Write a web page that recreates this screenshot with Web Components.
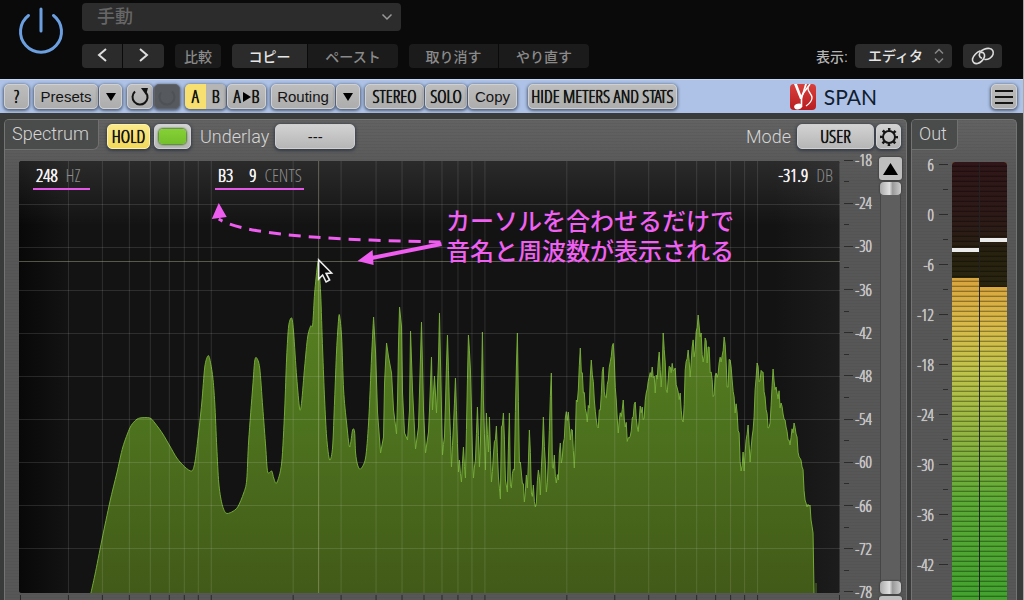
<!DOCTYPE html>
<html lang="ja">
<head>
<meta charset="utf-8">
<title>SPAN</title>
<style>
html,body{margin:0;height:100%;background:#0a0a0a}
body{font-family:"Liberation Sans","Noto Sans CJK JP",sans-serif;overflow:hidden;
--narrow:"Open Sans Condensed Light","Roboto Condensed",sans-serif;
--ink:0 0 0 currentColor,0 0 0 currentColor,0 0 1px currentColor}
</style>
</head>
<body>
<span-app></span-app>
<script>
function define(name, html, setup) {
  const tpl = document.createElement('template');
  tpl.innerHTML = html;
  customElements.define(name, class extends HTMLElement {
    constructor() {
      super();
      this.attachShadow({mode: 'open'}).append(tpl.content.cloneNode(true));
    }
    connectedCallback() { if (setup) setup(this, this.shadowRoot); }
  });
}

/* Plug-in button: kind = narrow | on | off | light ; w = width in px */
define('plug-button', `<style>
:host{display:block;width:var(--w,auto);height:25px;flex:none}
button{box-sizing:border-box;width:100%;height:100%;padding:0;border:1px solid #d0d0d0;border-radius:5px;background:linear-gradient(#bdbdbd,#adadad);
box-shadow:0 1px 3px 1px rgba(30,40,60,.6);color:#141414;font:15px/23px "Liberation Sans",sans-serif;white-space:nowrap;display:flex;align-items:center;justify-content:center}
:host([kind~=narrow]) button{font-family:var(--narrow);font-size:18px;font-weight:300;text-shadow:var(--ink)}
:host([kind~=on]) button{background:linear-gradient(#fbe98a,#f2d95c);border-color:#fdf0a8}
:host([kind~=off]) button{background:#56595d;border-color:#606468;color:#4a4c50}
:host([kind~=light]) button{background:linear-gradient(#d2d2d2,#b6b6b6)}
</style><button type="button"><slot></slot></button>`, (h, r) => {
  if (h.getAttribute('w')) h.style.setProperty('--w', h.getAttribute('w') + 'px');
  if (h.getAttribute('label')) r.querySelector('button').setAttribute('aria-label', h.getAttribute('label'));
});

define('host-header', `<style>
:host{display:flex;box-sizing:border-box;height:79px;flex:none;background:#0a0a0a;padding-left:17px;color:#b4b4b4;font:500 14px "Liberation Sans","Noto Sans CJK JP",sans-serif}
.power{width:48px;height:48px;margin-top:6px;padding:0;border:0;background:none;flex:none}
.col{flex:1;margin:3px 21px 0 17px;display:flex;flex-direction:column;gap:13px}
button,select{font:500 14px "Liberation Sans","Noto Sans CJK JP",sans-serif;color:inherit}
.wrap{position:relative;display:block}
.wrap svg{position:absolute;right:8px;top:50%;transform:translateY(-50%);pointer-events:none}
select{appearance:none;border:0;background:#2c2c2c;border-radius:4px;width:100%;margin:0;height:24px;padding:0 0 0 13px}
.preset{width:319px}
.preset select{height:28px;color:#666;font-size:18px;padding-left:15px}
.row{display:flex;align-items:center}
.grp{display:flex;gap:1px;margin-right:11px;border-radius:4px;overflow:hidden}
.grp button{height:24px;border:0;padding:0;background:#1b1b1b;color:#8a8a8a}
.grp .a{background:#2b2b2b;color:#e6e6e6}
label{margin:0 7px 0 auto}
.view{width:97px;color:#e6e6e6;margin-right:11px}
.link{width:39px;height:24px;border:0;padding:0;border-radius:4px;background:#2c2c2c;color:#ddd;display:grid;place-items:center}
</style>
<button class="power" type="button" aria-label="Power"><svg width="48" height="48" fill="none" stroke="#6b9fe0" stroke-width="3" stroke-linecap="round"><path d="M24 3v22M11.5 9.5a20.500 20.500 0 1 0 25 0"/></svg></button>
<div class="col">
<div class="wrap preset"><select aria-label="プリセット"><option>手動</option></select><svg width="12" height="8" fill="none" stroke="#999" stroke-width="1.500"><path d="M1.500 1.500L6 6l4.500-4.500"/></svg></div>
<div class="row">
<div class="grp"><button class="a" type="button" aria-label="前へ" style="width:40px"><svg width="12" height="16" fill="none" stroke="#ddd" stroke-width="2"><path d="M10 2L3 8l7 6"/></svg></button><button class="a" type="button" aria-label="次へ" style="width:41px"><svg width="12" height="16" fill="none" stroke="#ddd" stroke-width="2"><path d="M2 2l7 6-7 6"/></svg></button></div>
<div class="grp"><button type="button" style="width:46px">比較</button></div>
<div class="grp"><button class="a" type="button" style="width:75px">コピー</button><button type="button" style="width:90px">ペースト</button></div>
<div class="grp"><button type="button" style="width:89px">取り消す</button><button type="button" style="width:90px">やり直す</button></div>
<label for="view">表示:</label>
<div class="wrap view"><select id="view"><option>エディタ</option></select><svg width="10" height="16" fill="none" stroke="#888" stroke-width="1.500"><path d="M1 5.500L5 1.500l4 4M1 10.500l4 4 4-4"/></svg></div>
<button class="link" type="button" aria-label="リンク"><svg width="24" height="18" fill="none" stroke="#ddd" stroke-width="1.600" stroke-linecap="round"><path d="M9 4C6 5 2 9 1.500 12s2 5 5 4.500 6.500-4 7-7-1.500-4.500-3-4"/><path d="M14 12.500c3 .5 7-2 8-5s-.5-5.500-3.500-6-8 1-9.500 4 0 5 1.500 5.500"/></svg></button>
</div></div>`);

define('tool-bar', `<style>
:host{display:flex;box-sizing:border-box;height:34px;flex:none;align-items:flex-start;gap:1px;padding:4px 6px 0 4px;background:#adc2e6;border-top:1px solid #c6d6f0}
.g{margin-left:4px}.w{margin-left:10px}
.seg{display:flex;width:41px;height:25px;border-radius:5px;overflow:hidden;box-shadow:0 1px 3px 1px rgba(30,40,60,.6);margin-left:4px}
.seg button{flex:1;padding:0;border:0;background:#b5b5b5;color:#141414;font:300 18px/23px var(--narrow);text-shadow:var(--ink)}.seg .on{background:#f7e070}
.brand{display:flex;gap:8px;margin:0 113px 0 auto;align-items:center;height:25px;font:21px Lato,sans-serif;color:#111d30}
</style>
<plug-button w="25" kind="narrow">?</plug-button>
<plug-button w="64" class="g">Presets</plug-button>
<plug-button w="23" label="Preset list"><svg width="10" height="8"><path d="M0 0h10L5 8z"/></svg></plug-button>
<plug-button w="26" class="g" label="Undo"><svg width="20" height="20" fill="none" stroke="#141414" stroke-width="2"><path d="M5 4.500a7.500 7.500 0 1 0 11 1"/><path d="M11 1h7l-2 7z" fill="#141414" stroke="none"/></svg></plug-button>
<plug-button w="26" kind="off" label="Redo"><svg width="20" height="20" fill="none" stroke="#4e5155" stroke-width="2"><path d="M15 4.500a7.500 7.500 0 1 1-11 1"/></svg></plug-button>
<div class="seg"><button class="on" type="button">A</button><button type="button">B</button></div>
<plug-button w="39" kind="narrow">A<svg width="11" height="10"><path d="M2 0l8 5-8 5z"/></svg>B</plug-button>
<plug-button w="64" class="g">Routing</plug-button>
<plug-button w="24" label="Routing list"><svg width="10" height="8"><path d="M0 0h10L5 8z"/></svg></plug-button>
<plug-button w="59" class="g" kind="narrow">STEREO</plug-button>
<plug-button w="42" kind="narrow">SOLO</plug-button>
<plug-button w="49">Copy</plug-button>
<plug-button w="149" class="w" kind="narrow">HIDE METERS AND STATS</plug-button>
<div class="brand"><svg width="26" height="26"><defs><linearGradient id="r" x2="0" y2="1"><stop stop-color="#d8403c"/><stop offset="1" stop-color="#b81c20"/></linearGradient></defs><rect width="26" height="26" rx="4" fill="url(#r)"/><path d="M4 0h3l4.500 12L15 0h2l-5 15h-2z" fill="#fff"/><path d="M20 0c-3 5-8 9-8.500 13v10" fill="none" stroke="#fff" stroke-width="1.600"/><path d="M18 3c-1 5 4.500 7 4 11-.3 4-3 6-6 8" fill="none" stroke="#fff" stroke-width="1.300"/><ellipse cx="8" cy="22.500" rx="4" ry="2.800" fill="#fff" transform="rotate(-14 8 22)"/></svg><span>SPAN</span></div>
<plug-button w="26" label="Menu"><svg width="18" height="16" stroke="#141414" stroke-width="2"><path d="M0 2h18M0 8h18M0 14h18"/></svg></plug-button>`);

define('plug-panel', `<style>
:host{display:flex;flex-direction:column;min-height:0;min-width:0;overflow:hidden;box-sizing:border-box;border:1px solid #747474;border-bottom:0;border-radius:5px 5px 0 0;background:repeating-linear-gradient(rgba(0,0,0,.04) 0 1px,transparent 1px 3px),linear-gradient(#626262,#575757 60px)}
header{display:flex;height:37px;flex:none}
h2{margin:-1px 0 0 -1px;box-sizing:border-box;width:var(--tab);height:31px;flex:none;padding-left:7px;font:300 18px/28px Roboto,"Liberation Sans",sans-serif;color:#d6d6d6;background:#4a4b4b;border:1px solid #707070;border-top-color:#333;border-left-color:#333;border-radius:4px 0 6px 0}
.c{flex:1;display:flex;gap:4px;padding:4px 5px 0 8px}
.b{flex:1;display:flex;min-height:0}
</style><header><h2><slot name="title"></slot></h2><div class="c"><slot name="controls"></slot></div></header><div class="b"><slot></slot></div>`);

/* Vertical dB scale: first value, number of labels, and a fixed pitch or an even spread over the height */
define('db-scale', `<style>
:host{display:flex;flex-direction:column;justify-content:space-between;flex:none;color:#c4c4c4;font:300 16px var(--narrow)}
div{display:flex;align-items:center;height:0;flex:none;overflow:visible}
i{height:1px;width:9px;background:#2c2c2c}
.m i{width:5px}
span{flex:1;text-align:right;line-height:16px;text-shadow:var(--ink)}
:host([side=right]) div{flex-direction:row-reverse;gap:5px}
:host([pitch]){justify-content:flex-start}
:host([pitch]) div{height:25px}
</style>`, (h, r) => {
  const from = +h.getAttribute('from'), n = +h.getAttribute('count');
  for (let i = 0; i < n * 2 - 1; i++) {
    const d = document.createElement('div');
    d.innerHTML = '<i></i>';
    if (i % 2) d.className = 'm';
    else { const s = document.createElement('span'); s.textContent = from - i * 3; d.append(s); }
    r.append(d);
  }
});

define('zoom-slider', `<style>
:host{display:flex;flex-direction:column;align-items:center;gap:2px;width:23px;margin-bottom:-19px}
.s{width:23px;height:23px;flex:none;padding:0;border:0;border-radius:3px;background:#bebebe;box-shadow:0 0 2px #222}
.t{width:21px;height:13px;flex:none;padding:0;border:0;border-radius:4px;background:linear-gradient(90deg,#aaa,#e0e0e0 45%,#999 60%,#ccc);box-shadow:0 0 2px #222}
.k{flex:1;width:19px;background:#5e5e5e;border:solid #454545;border-width:0 1px;margin:-2px 0}
</style><button class="s" type="button" aria-label="Up"><svg width="15" height="12" style="display:block;margin:auto"><path d="M7.500 0L15 12H0z"/></svg></button><button class="t" type="button" aria-label="Upper limit"></button><div class="k"></div><button class="t" type="button" aria-label="Lower limit"></button><button class="s" type="button" aria-label="Down"></button>`);

/* Measured spectrum: x (log frequency), y (level) pairs in plot units */
const SMOOTH = [91,593,95,575,102,540,110,502,117,473,123,447,130,428,135,421,140,418,150,418,155,423,163,434,170,446,177,458,185,467,192,471,195,463,198,440,202,403,205,367,208,356,210,359,213,377,215,403,217,447,219,483,222,503,226,513,232,512,238,507,244,493,247,480,249,440,253,387,255,361,257,358,260,368,263,407,266,447,268,472,272,471,274,478,277,483,282,463,285,410,287,357,289,326,292,318,294,333,297,377,300,409,302,402,305,367,308,337,311,326,313,325,315,293,318,264,319,264,321,293,323,350,325,400,327,437,330,460,333,447,335,400,337,350,339,319,340,316,342,337,344,390,347,423,350,447,353,430,355,432,356,453,358,465,361,469,366,458,369,423,372,357,374,317];
const ROUGH = [376,353,378,413,381,453,384,437,385,383,387,343,389,357,392,373,394,410,397,434,398,400,399,343,400,307,402,327,403,393,405,433,408,440,410,410,411,331,413,390,416,449,419,427,422,322,424,410,426,453,429,432,430,410,432,357,433,410,435,376,437,413,439,360,440,313,442,410,443,455,445,437,448,335,450,410,452,467,456,378,459,472,460,460,462,482,464,447,466,478,469,335,471,370,473,453,474,478,476,460,478,407,480,467,481,443,483,332,484,400,486,470,487,413,489,452,490,417,492,482,494,455,497,426,499,477,501,499,502,427,504,413,506,480,508,492,510,413,511,485,515,470,517,367,518,333,520,463,522,473,525,502,527,475,528,488,530,430,532,493,534,485,536,507,539,470,541,495,544,417,547,492,549,460,552,373,553,467,555,455,557,483,559,480,561,443,562,463,564,443,566,418,569,412,571,440,573,430,575,468,577,400,579,390,581,348,584,393,588,422,590,408,592,360,595,400,599,428,601,410,604,367,606,397,609,380,613,346,615,360,617,400,619,433,624,400,626,427,630,438,633,418,636,402,638,427,643,407,645,418,647,393,650,377,653,367,656,393,660,352,662,387,664,333,667,390,671,367,676,368,678,388,681,393,684,422,686,370,689,350,691,377,693,347,696,350,699,315,702,333,704,362,706,338,708,363,709,347,712,372,715,395,717,373,720,363,722,362,725,337,728,387,731,360,733,380,736,413,738,413,740,433,742,471,744,452,745,471,747,440,749,425,751,462,753,437,754,430,756,390,758,363,761,380,763,372,766,397,769,428,771,423,774,369,777,387,782,403,787,427,791,445,795,423,798,437,800,457,803,467,806,500,808,507,811,505,812,520,814,533,815,593];
function curve() {
  const p = [];
  for (let i = 0; i < SMOOTH.length; i += 2) p.push([SMOOTH[i], SMOOTH[i + 1]]);
  let d = 'M' + p[0];
  for (let i = 0; i < p.length - 1; i++) {
    const a = p[i - 1] || p[i], b = p[i], c = p[i + 1], e = p[i + 2] || c;
    d += 'C' + [b[0] + (c[0] - a[0]) / 7, b[1] + (c[1] - a[1]) / 7, c[0] - (e[0] - b[0]) / 7, c[1] - (e[1] - b[1]) / 7, c[0], c[1]].map(v => v.toFixed(1));
  }
  let x = p[p.length - 1][0], y = p[p.length - 1][1];
  for (let i = 0; i < ROUGH.length; i += 2) {
    const X = ROUGH[i], Y = ROUGH[i + 1];
    if (x > 440) for (let k = x + 1; k < X; k++) {
      const j = (Math.abs(Math.sin(k * 91.7) * 4375) % 1 - .5) * (x > 500 ? 20 : 8);
      d += 'L' + k + ' ' + (y + (Y - y) * (k - x) / (X - x) + j).toFixed(1);
    }
    d += 'L' + X + ' ' + Y; x = X; y = Y;
  }
  return d;
}

define('spectrum-plot', `<style>
:host{display:block;position:relative;flex:1;min-width:0;background:#111;border-radius:3px;overflow:hidden}
.plot{position:absolute;inset:0;width:100%;height:100%}
.read{position:absolute;inset:0 7px auto 14px;display:flex;font:300 18px/28px var(--narrow);color:#8c8c8c}
.read b{font-weight:300;color:#f2f2f2;text-shadow:var(--ink)}
.read span{box-sizing:border-box;height:29px;border-bottom:2px solid #e257e6;padding-left:3px;display:flex;gap:8px}
.read b+b{margin-left:8px}
.read .hz{width:57px}
.read .note{width:89px;margin-left:125px}
.read .z{border:0;margin-left:auto}
p{position:absolute;left:52%;top:46px;margin:0;color:#f060f2;font:500 24px/30px "Liberation Sans","Noto Sans CJK JP",sans-serif;white-space:nowrap}
</style>
<svg class="plot" viewBox="19 161 822 432" preserveAspectRatio="none">
<defs><linearGradient id="bg" x2="1" y2="0"><stop stop-color="#080808"/><stop offset=".06" stop-color="#131313"/><stop offset=".92" stop-color="#131313"/><stop offset="1" stop-color="#1c1c1c"/></linearGradient>
<linearGradient id="top" x2="0" y2="1"><stop stop-color="#fff" stop-opacity=".1"/><stop offset=".15" stop-color="#fff" stop-opacity="0"/></linearGradient>
<linearGradient id="f" gradientUnits="userSpaceOnUse" x1="0" x2="0" y1="260" y2="593"><stop stop-color="#5d8424"/><stop offset=".5" stop-color="#4d721e"/><stop offset="1" stop-color="#425a18"/></linearGradient></defs>
<rect x="19" y="161" width="822" height="432" fill="url(#bg)"/><rect x="19" y="161" width="822" height="432" fill="url(#top)"/>
<path id="fill" fill="url(#f)"/><path id="line" fill="none" stroke="#74aa38" stroke-width="1"/><path d="M817 593v-10" stroke="#4f7520"/>
<path id="grid" stroke="#fff" stroke-opacity=".12" fill="none"/>
<path d="M19 261.500H841M319 161V593" stroke="#ccd0a8" stroke-opacity=".38" fill="none"/>
<g stroke="#ee5cf0" fill="none"><path d="M441 242C360 240 250 238 219 219" stroke-width="3" stroke-dasharray="12 8"/><path d="M442 244L372 258" stroke-width="4"/><path d="M358 261l15-11 1 15zM219 203l-7 16 15-2z" fill="#ee5cf0" stroke="none"/></g>
<path d="M319 260v19l4-4 3.500 7 3.500-2-3.500-6.500 5.500-.5z" fill="#0a0a0a" stroke="#eee" stroke-width="1.600"/>
</svg>
<div class="read"><span class="hz"><b>248</b>HZ</span><span class="note"><b>B3</b><b>9</b>CENTS</span><span class="z"><b>-31.9</b>DB</span></div>
<p>カーソルを合わせるだけで<br>音名と周波数が表示される</p>`, (h, r) => {
  const c = curve();
  r.getElementById('line').setAttribute('d', c);
  r.getElementById('fill').setAttribute('d', c + 'Z');
  let g = '';
  for (let y = 204; y < 590; y += 43) g += 'M19 ' + (y + .5) + 'H841';
  for (let dec = 10; dec <= 10000; dec *= 10) for (let k = 1; k < 10; k++) {
    const x = Math.round(211 + 273.5 * Math.log10(dec * k / 100)) + .5;
    if (x > 22 && x < 841) g += 'M' + x + ' 161V593';
  }
  r.getElementById('grid').setAttribute('d', g);
});

define('freq-ticks', `<style>:host{display:block;height:7px;flex:none}svg{display:block;width:100%;height:7px}</style><svg viewBox="19 0 822 7" preserveAspectRatio="none"><path stroke="#2a2a2a"/></svg>`, (h, r) => {
  let g = '';
  for (let dec = 10; dec <= 10000; dec *= 10) for (let k = 1; k < 10; k++) {
    const x = Math.round(211 + 273.5 * Math.log10(dec * k / 100)) + .5;
    if (x > 18 && x < 841) g += 'M' + x + ' 2V7';
  }
  r.querySelector('path').setAttribute('d', g);
});

define('level-meter', `<style>
:host{display:flex;flex:1;gap:1px;background:#222;border-radius:3px 3px 0 0;overflow:hidden}
.ch{flex:1;position:relative;background:linear-gradient(#d9a43c 116px,#d8bb4a 165px,#bfc44a 210px,#8cb440 280px,#5cab35 340px,#43a32e 430px)}
.off{background:linear-gradient(#301618,#2c1b17 65px,#27210f 90px,#29250f)}
.pk{position:absolute;left:0;right:0;height:4px;background:#ececec}
.st{position:absolute;inset:0;background:repeating-linear-gradient(transparent 0 3px,rgba(0,0,0,.12) 3px 4px,rgba(0,0,0,.34) 4px 5px)}
</style>
<div class="ch"><div class="off" style="height:116px"></div><div class="st"></div><div class="pk" style="top:86px"></div></div>
<div class="ch"><div class="off" style="height:125px"></div><div class="st"></div><div class="pk" style="top:76px"></div></div>`);

define('span-app', `<style>
:host{display:flex;flex-direction:column;height:100vh;border-right:1px solid #a8a8a8;background:#0a0a0a;overflow:hidden}
main{flex:1;min-height:0;display:grid;grid-template-columns:1fr 106px;gap:4px;padding:6px 6px 0 4px;background:#393b3b}
.t{font:300 18px/25px Roboto,"Liberation Sans",sans-serif;color:#d6d6d6;margin:0 2px 0 5px}
.mode{margin-left:auto}
.plot{flex:1;display:flex;flex-direction:column;min-width:0;margin:4px 0 0 14px}
.led{width:27px;height:15px;border-radius:4px;background:linear-gradient(#86d036,#74c02c);box-shadow:0 0 2px 1px #4a7a22}
</style>
<host-header></host-header>
<tool-bar></tool-bar>
<main>
<plug-panel style="--tab:95px"><span slot="title">Spectrum</span>
<plug-button slot="controls" w="43" kind="narrow on">HOLD</plug-button>
<plug-button slot="controls" w="37" kind="light" label="Spectrum on"><div class="led"></div></plug-button>
<span slot="controls" class="t">Underlay</span>
<plug-button slot="controls" w="80" kind="light">---</plug-button>
<span slot="controls" class="t mode">Mode</span>
<plug-button slot="controls" w="77" kind="narrow light">USER</plug-button>
<plug-button slot="controls" w="25" kind="light" label="Settings" style="margin-left:-2px"><svg width="20" height="20" fill="none" stroke="#141414"><circle cx="10" cy="10" r="6" stroke-width="2"/><circle cx="10" cy="10" r="7.500" stroke-width="3" stroke-dasharray="2.400 3.490" stroke-dashoffset="1.200"/></svg></plug-button>
<div class="plot"><spectrum-plot></spectrum-plot><freq-ticks></freq-ticks></div>
<db-scale from="-18" count="11" style="width:28px;margin:3px 7px 8px 4px"></db-scale>
<zoom-slider style="margin-right:4px"></zoom-slider>
</plug-panel>
<plug-panel style="--tab:47px"><span slot="title">Out</span>
<db-scale side="right" pitch="50" from="6" count="9" style="width:36px;margin:-5px 4px 0 0"></db-scale>
<level-meter style="margin:5px 9px 0 0"></level-meter>
</plug-panel>
</main>`);
</script>
</body>
</html>
